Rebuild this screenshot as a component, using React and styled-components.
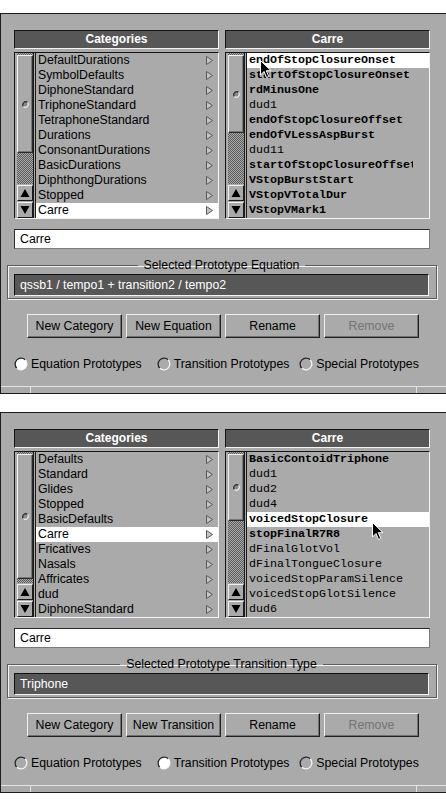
import React from 'react';
import styled, { createGlobalStyle } from 'styled-components';

const Global = createGlobalStyle`
  html, body { margin: 0; padding: 0; background: #ffffff; }
  body { font-family: "Liberation Sans", Arial, sans-serif; font-size: 12px; color: #000; }
  * { box-sizing: border-box; }
`;

const Page = styled.div`
  width: 446px;
  padding-top: 13px;
  display: flex;
  flex-direction: column;
  gap: 18px;
`;

const Panel = styled.section`
  height: 381px;
  background: #aaaaaa;
  border-top: 1px solid #1c1c1c;
  border-left: 1px solid #1c1c1c;
  border-bottom: 1px solid #1c1c1c;
  display: flex;
  flex-direction: column;
  padding-top: 16px;
`;

const Lists = styled.div`
  display: grid;
  grid-template-columns: 205px 205px;
  column-gap: 6px;
  padding-left: 13px;
`;

const Column = styled.div`
  display: flex;
  flex-direction: column;
  gap: 3px;
`;

const Header = styled.div`
  height: 19px;
  background: #575757;
  border-top: 1px solid #151515;
  border-left: 1px solid #151515;
  border-bottom: 1px solid #f4f4f4;
  border-right: 1px solid #f4f4f4;
  color: #ffffff;
  font-weight: bold;
  font-size: 12px;
  line-height: 17px;
  text-align: center;
`;

const ListBox = styled.div`
  position: relative;
  height: 167px;
  display: flex;
  border-top: 1px solid #151515;
  border-left: 1px solid #151515;
  border-bottom: 1px solid #f4f4f4;
  border-right: 1px solid #f4f4f4;
  overflow: hidden;
`;

const Scrollbar = styled.div`
  width: 21px;
  flex: none;
  padding: 0 0 0 2px;
  border-right: 3px double #1c1c1c;
  display: flex;
  flex-direction: column;
`;

const Trough = styled.div`
  flex: 1;
  background-color: #aaaaaa;
  background-image: repeating-conic-gradient(#5c5c5c 0 25%, #aaaaaa 0 50%);
  background-size: 2px 2px;
  padding-top: 2px;
`;

const Thumb = styled.div`
  width: 16px;
  background: #aaaaaa;
  border-top: 1px solid #f2f2f2;
  border-left: 1px solid #f2f2f2;
  border-bottom: 1px solid #2a2a2a;
  border-right: 1px solid #2a2a2a;
  box-shadow: inset -1px -1px 0 #777;
  display: flex;
  align-items: center;
  justify-content: center;
`;

const ArrowBtn = styled.div`
  width: 16px;
  height: 16px;
  margin-top: 1px;
  background: #aaaaaa;
  border-top: 1px solid #f2f2f2;
  border-left: 1px solid #f2f2f2;
  border-bottom: 1px solid #1a1a1a;
  border-right: 1px solid #1a1a1a;
  display: flex;
  align-items: center;
  justify-content: center;
`;

const Items = styled.div`
  flex: 1;
  min-width: 0;
  display: flex;
  flex-direction: column;
`;

const Row = styled.div`
  height: 15px;
  flex: none;
  display: flex;
  align-items: center;
  justify-content: space-between;
  padding: 0 5px 0 2px;
  white-space: nowrap;
  overflow: hidden;
  background: ${p => (p.$selected ? '#ffffff' : 'transparent')};
  font-family: ${p => (p.$mono ? '"Liberation Mono", "Courier New", monospace' : '"Liberation Sans", Arial, sans-serif')};
  font-size: ${p => (p.$mono ? '11.67px' : '12.3px')};
  font-weight: ${p => (p.$bold ? 'bold' : 'normal')};
  line-height: 15px;
`;

const Label = styled.span`
  overflow: hidden;
  max-width: ${p => (p.$mono ? '164px' : 'none')};
`;

const Cursor = styled.svg`
  position: absolute;
  pointer-events: none;
`;

const TextInput = styled.div`
  margin: 10px 16px 0 13px;
  height: 20px;
  background: #ffffff;
  border-top: 1px solid #2a2a2a;
  border-left: 1px solid #2a2a2a;
  border-bottom: 1px solid #7a7a7a;
  border-right: 1px solid #7a7a7a;
  padding-left: 5px;
  line-height: 18px;
  font-size: 12.3px;
`;

const Group = styled.fieldset`
  margin: 9px 9px 0 6px;
  padding: 2px 7px 2px 6px;
  border: 1px solid #5c5c5c;
  box-shadow: 1px 1px 0 #f4f4f4, inset 1px 1px 0 #f4f4f4;
  min-width: 0;
`;

const Legend = styled.legend`
  margin: 0 auto;
  padding: 0 6px;
  font-size: 12.3px;
  line-height: 14px;
`;

const DarkField = styled.div`
  height: 22px;
  background: #575757;
  border-top: 1px solid #101010;
  border-left: 1px solid #101010;
  border-bottom: 1px solid #f4f4f4;
  border-right: 1px solid #f4f4f4;
  color: #ffffff;
  padding-left: 5px;
  line-height: 20px;
  font-size: 12.3px;
`;

const ButtonRow = styled.div`
  margin-top: 15px;
  display: flex;
  justify-content: center;
  gap: 4px;
  padding-right: 1px;
`;

const Button = styled.div`
  width: 95px;
  height: 24px;
  background: #aaaaaa;
  border-top: 1px solid #f0f0f0;
  border-left: 1px solid #f0f0f0;
  border-bottom: 1px solid #202020;
  border-right: 1px solid #202020;
  box-shadow: inset -1px -1px 0 #707070;
  display: flex;
  align-items: center;
  justify-content: center;
  font-size: 12.3px;
  color: ${p => (p.$disabled ? '#747474' : '#000000')};
`;

const RadioRow = styled.div`
  margin-top: 18px;
  display: grid;
  grid-template-columns: 1fr 1fr 1fr;
  padding: 0 4px 0 13px;
`;

const RadioItem = styled.div`
  display: flex;
  align-items: center;
  gap: 3px;
  height: 15px;
  font-size: 12.3px;
  white-space: nowrap;
`;

const Footer = styled.div`
  margin-top: auto;
  height: 7px;
  border-top: 1px solid #e4e4e4;
  display: grid;
  grid-template-columns: 29px 1fr 30px;
`;

const FooterCell = styled.div`
  border-left: ${p => (p.$first ? 'none' : '1px solid #e4e4e4')};
`;

function Tri() {
  return (
    <svg width="7" height="9" viewBox="0 0 7 9">
      <polygon points="0.5,0.5 6.5,4.5 0.5,8.5" fill="#c4c4c4" stroke="#5a5a5a" strokeWidth="1" />
    </svg>
  );
}

function Dot() {
  return (
    <svg width="7" height="7" viewBox="0 0 7 7">
      <circle cx="3.5" cy="3.5" r="3" fill="#8a8a8a" />
      <path d="M1.4 5.6 A3 3 0 0 1 5.6 1.4" fill="none" stroke="#2a2a2a" strokeWidth="1.2" />
      <path d="M5.6 1.4 A3 3 0 0 1 1.4 5.6" fill="none" stroke="#f0f0f0" strokeWidth="1.2" />
    </svg>
  );
}

function Arrow({ up }) {
  return (
    <svg width="10" height="10" viewBox="0 0 10 10">
      {up ? <polygon points="5,1 9.5,9 0.5,9" fill="#000" /> : <polygon points="0.5,1 9.5,1 5,9" fill="#000" />}
    </svg>
  );
}

function Radio({ checked }) {
  return (
    <svg width="14" height="14" viewBox="0 0 14 14">
      <circle cx="7" cy="7" r="6" fill={checked ? '#ffffff' : '#aaaaaa'} />
      <path d="M2.76 11.24 A6 6 0 0 1 11.24 2.76" fill="none" stroke="#262626" strokeWidth="1.3" />
      <path d="M11.24 2.76 A6 6 0 0 1 2.76 11.24" fill="none" stroke="#f6f6f6" strokeWidth="1.3" />
    </svg>
  );
}

function PointerCursor({ left, top }) {
  return (
    <Cursor width="12" height="19" viewBox="0 0 12 19" style={{ left, top }}>
      <path d="M0.5 0.5 L0.5 15 L4 11.5 L6.5 17.5 L8.8 16.5 L6.3 10.7 L11 10.7 Z" fill="#000" stroke="#fff" strokeWidth="1" />
    </Cursor>
  );
}

function Scroll({ thumb }) {
  return (
    <Scrollbar>
      <Trough>
        <Thumb style={{ height: thumb }}>
          <Dot />
        </Thumb>
      </Trough>
      <ArrowBtn><Arrow up /></ArrowBtn>
      <ArrowBtn><Arrow /></ArrowBtn>
    </Scrollbar>
  );
}

function CategoryList({ items, selected, thumb }) {
  return (
    <ListBox>
      <Scroll thumb={thumb} />
      <Items>
        {items.map(name => (
          <Row key={name} $selected={name === selected}>
            <Label>{name}</Label>
            <Tri />
          </Row>
        ))}
      </Items>
    </ListBox>
  );
}

function PrototypeList({ items, selected, thumb, cursor }) {
  return (
    <ListBox>
      <Scroll thumb={thumb} />
      <Items>
        {items.map(([name, bold]) => (
          <Row key={name} $mono $bold={bold} $selected={name === selected}>
            <Label $mono>{name}</Label>
          </Row>
        ))}
      </Items>
      {cursor && <PointerCursor left={cursor[0]} top={cursor[1]} />}
    </ListBox>
  );
}

function ManagerPanel({ data }) {
  return (
    <Panel>
      <Lists>
        <Column>
          <Header>Categories</Header>
          <CategoryList items={data.categories} selected="Carre" thumb={data.leftThumb} />
        </Column>
        <Column>
          <Header>Carre</Header>
          <PrototypeList items={data.protos} selected={data.selectedProto} thumb={data.rightThumb} cursor={data.cursor} />
        </Column>
      </Lists>
      <TextInput>Carre</TextInput>
      <Group>
        <Legend>{data.groupTitle}</Legend>
        <DarkField>{data.fieldText}</DarkField>
      </Group>
      <ButtonRow>
        <Button>New Category</Button>
        <Button>{data.newLabel}</Button>
        <Button>Rename</Button>
        <Button $disabled>Remove</Button>
      </ButtonRow>
      <RadioRow>
        {['Equation Prototypes', 'Transition Prototypes', 'Special Prototypes'].map((r, i) => (
          <RadioItem key={r}>
            <Radio checked={i === data.radio} />
            <span>{r}</span>
          </RadioItem>
        ))}
      </RadioRow>
      <Footer>
        <FooterCell $first />
        <FooterCell />
        <FooterCell />
      </Footer>
    </Panel>
  );
}

const panels = [
  {
    categories: ['DefaultDurations', 'SymbolDefaults', 'DiphoneStandard', 'TriphoneStandard', 'TetraphoneStandard', 'Durations', 'ConsonantDurations', 'BasicDurations', 'DiphthongDurations', 'Stopped', 'Carre'],
    protos: [
      ['endOfStopClosureOnset', true],
      ['startOfStopClosureOnset', true],
      ['rdMinusOne', true],
      ['dud1', false],
      ['endOfStopClosureOffset', true],
      ['endOfVLessAspBurst', true],
      ['dud11', false],
      ['startOfStopClosureOffset', true],
      ['VStopBurstStart', true],
      ['VStopVTotalDur', true],
      ['VStopVMark1', true],
    ],
    selectedProto: 'endOfStopClosureOnset',
    leftThumb: 98,
    rightThumb: 78,
    cursor: [34, 7],
    groupTitle: 'Selected Prototype Equation',
    fieldText: 'qssb1 / tempo1 + transition2 / tempo2',
    newLabel: 'New Equation',
    radio: 0,
  },
  {
    categories: ['Defaults', 'Standard', 'Glides', 'Stopped', 'BasicDefaults', 'Carre', 'Fricatives', 'Nasals', 'Affricates', 'dud', 'DiphoneStandard'],
    protos: [
      ['BasicContoidTriphone', true],
      ['dud1', false],
      ['dud2', false],
      ['dud4', false],
      ['voicedStopClosure', true],
      ['stopFinalR7R8', true],
      ['dFinalGlotVol', false],
      ['dFinalTongueClosure', false],
      ['voicedStopParamSilence', false],
      ['voicedStopGlotSilence', false],
      ['dud6', false],
    ],
    selectedProto: 'voicedStopClosure',
    leftThumb: 125,
    rightThumb: 67,
    cursor: [146, 70],
    groupTitle: 'Selected Prototype Transition Type',
    fieldText: 'Triphone',
    newLabel: 'New Transition',
    radio: 1,
  },
];

export default function App() {
  return (
    <>
      <Global />
      <Page>
        {panels.map((p, i) => (
          <ManagerPanel key={i} data={p} />
        ))}
      </Page>
    </>
  );
}
